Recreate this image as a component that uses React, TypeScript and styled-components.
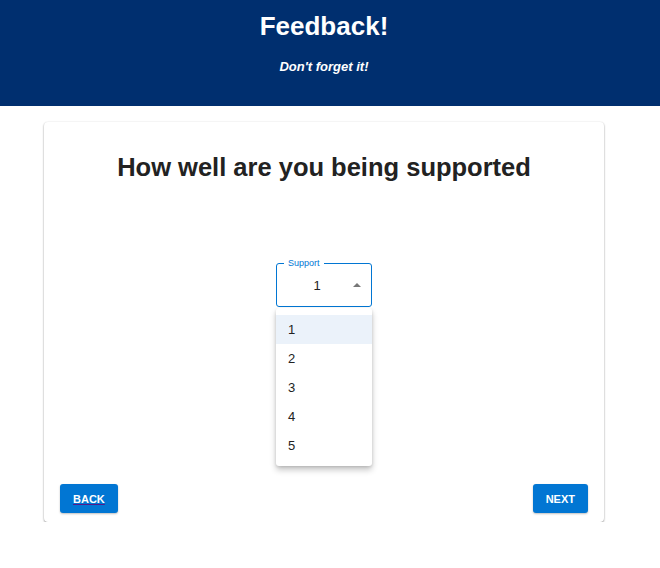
import React, { useState } from 'react';
import styled, { createGlobalStyle } from 'styled-components';

const COLORS = {
  navy: '#002f6f',
  blue: '#0176d3',
  text: '#222222',
  white: '#ffffff',
  hover: '#ebf2fa',
};

const GlobalStyle = createGlobalStyle`
  html, body {
    margin: 0;
    padding: 0;
    background: ${COLORS.white};
    font-family: "Liberation Sans", Arial, sans-serif;
  }
`;

const Header = styled.header`
  background: ${COLORS.navy};
  height: 106px;
  color: ${COLORS.white};
`;

const HeaderInner = styled.div`
  width: 648px;
  text-align: center;
  padding-top: 10px;
`;

const Title = styled.h1`
  margin: 0;
  font-size: 26px;
  font-weight: 700;
  line-height: 32px;
`;

const Subtitle = styled.p`
  margin: 17px 0 0;
  font-size: 13px;
  font-weight: 700;
  font-style: italic;
`;

const Card = styled.section`
  width: 560px;
  margin: 16px 0 0 44px;
  background: ${COLORS.white};
  border-radius: 4px;
  box-shadow: 0 1px 2px rgba(0, 0, 0, 0.4), 0 0 2px rgba(0, 0, 0, 0.08);
  display: flex;
  flex-direction: column;
  align-items: center;
  padding: 29px 16px 8px;
  box-sizing: border-box;
  height: 400px;
`;

const Question = styled.h2`
  margin: 0;
  font-size: 25.5px;
  font-weight: 700;
  color: ${COLORS.text};
  line-height: 32px;
`;

const SelectWrap = styled.div`
  position: relative;
  margin-top: 80px;
  width: 96px;
`;

const Field = styled.div`
  position: relative;
  height: 44px;
  border: 1px solid ${COLORS.blue};
  border-radius: 3px;
  box-sizing: border-box;
  display: flex;
  align-items: center;
  justify-content: center;
  font-size: 13px;
  color: ${COLORS.text};
  padding-right: 14px;
`;

const Legend = styled.span`
  position: absolute;
  top: -7px;
  left: 7px;
  padding: 0 4px;
  background: ${COLORS.white};
  color: ${COLORS.blue};
  font-size: 9px;
  line-height: 12px;
`;

const Arrow = styled.span`
  position: absolute;
  right: 10px;
  top: 19px;
  width: 0;
  height: 0;
  border-left: 4px solid transparent;
  border-right: 4px solid transparent;
  border-bottom: 4px solid #777;
`;

const Menu = styled.ul`
  position: absolute;
  top: 45px;
  left: 0;
  right: 0;
  margin: 0;
  padding: 7px 0 6px;
  list-style: none;
  background: ${COLORS.white};
  border-radius: 3px;
  box-shadow: 0 4px 6px rgba(0, 0, 0, 0.22), 0 1px 3px rgba(0, 0, 0, 0.12);
  z-index: 2;
`;

const Option = styled.li<{ $active: boolean }>`
  height: 29px;
  line-height: 29px;
  padding-left: 12px;
  font-size: 13px;
  color: ${COLORS.text};
  background: ${(p) => (p.$active ? COLORS.hover : 'transparent')};
`;

const Footer = styled.div`
  margin-top: auto;
  align-self: stretch;
  display: flex;
  justify-content: space-between;
  padding: 0 0 1px;
`;

const Button = styled.button<{ $underline?: boolean }>`
  background: ${COLORS.blue};
  color: ${COLORS.white};
  border: none;
  border-radius: 3px;
  height: 29px;
  padding: 0 13px;
  font-family: "Liberation Sans", Arial, sans-serif;
  font-size: 11px;
  font-weight: 700;
  box-shadow: 0 1px 2px rgba(0, 0, 0, 0.25);
  text-decoration: ${(p) => (p.$underline ? 'underline' : 'none')};
  text-decoration-color: #551a8b;
  cursor: pointer;
`;

export default function App() {
  const [value] = useState(1);
  const options = [1, 2, 3, 4, 5];

  return (
    <>
      <GlobalStyle />
      <Header>
        <HeaderInner>
          <Title>Feedback!</Title>
          <Subtitle>Don't forget it!</Subtitle>
        </HeaderInner>
      </Header>
      <Card>
        <Question>How well are you being supported</Question>
        <SelectWrap>
          <Field>
            <Legend>Support</Legend>
            {value}
            <Arrow />
          </Field>
          <Menu>
            {options.map((o) => (
              <Option key={o} $active={o === value}>
                {o}
              </Option>
            ))}
          </Menu>
        </SelectWrap>
        <Footer>
          <Button $underline>BACK</Button>
          <Button>NEXT</Button>
        </Footer>
      </Card>
    </>
  );
}
